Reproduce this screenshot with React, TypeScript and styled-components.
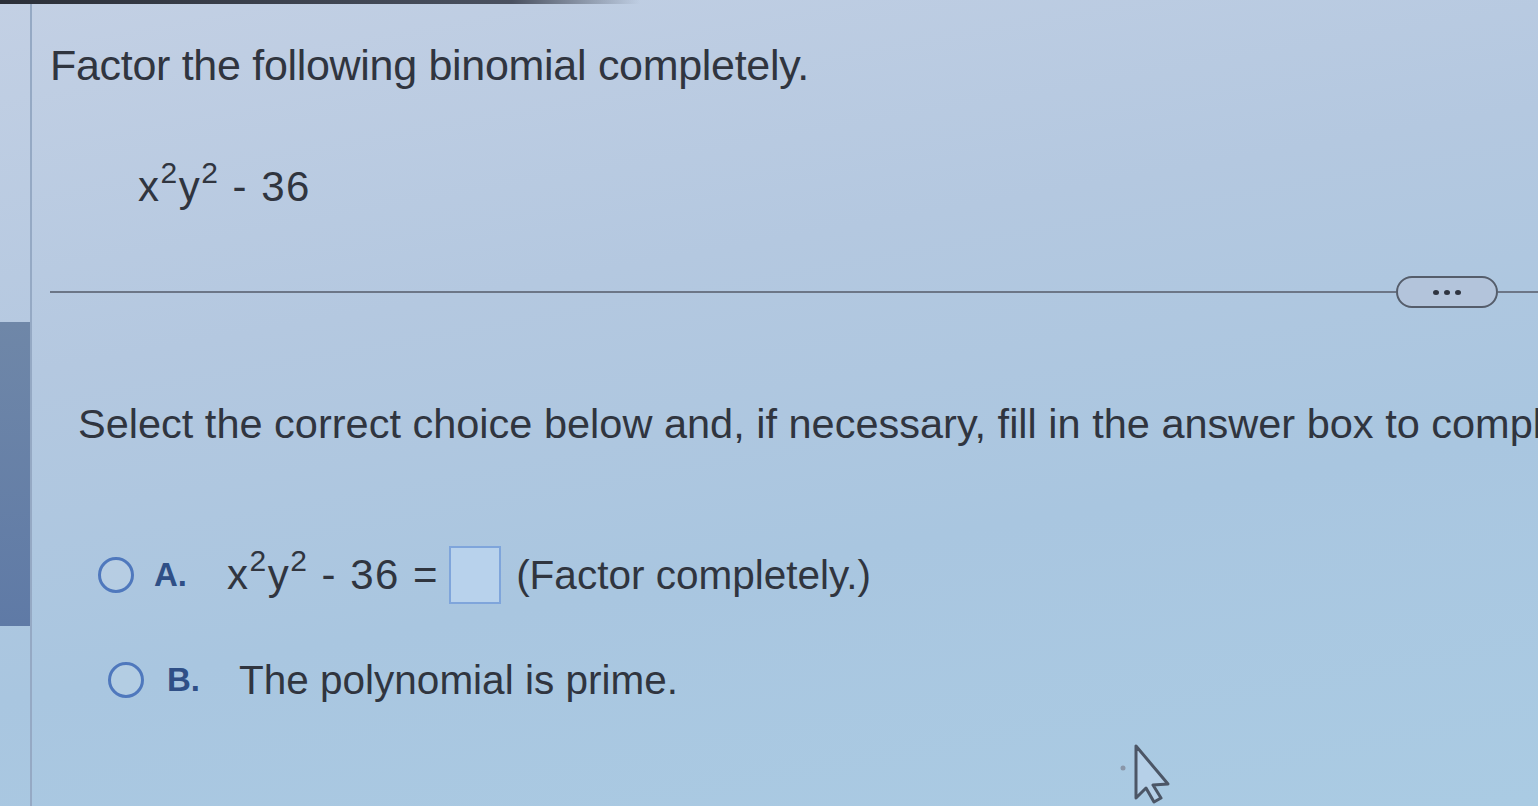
import styled, { createGlobalStyle } from 'styled-components'

const Global = createGlobalStyle`
  html, body {
    margin: 0;
    padding: 0;
    overflow: hidden;
  }
  body {
    font-family: "Liberation Sans", Arial, sans-serif;
  }
`

const Page = styled.div`
  position: relative;
  width: 1538px;
  height: 806px;
  overflow: hidden;
  display: flex;
  background: linear-gradient(170deg, #c3d0e4 0%, #b4c8e0 35%, #a9c6e0 65%, #aacbe3 100%);
  color: #30353f;
  &::before {
    content: "";
    position: absolute;
    top: 0;
    left: 0;
    width: 640px;
    height: 4px;
    background: linear-gradient(90deg, #2b2f38 0%, #4a5160 80%, rgba(74, 81, 96, 0) 100%);
  }
`

const SideRail = styled.div`
  width: 30px;
  flex: none;
  display: flex;
  flex-direction: column;
  padding-top: 322px;
  border-right: 2px solid #95a9c4;
`

const RailBlock = styled.div`
  height: 304px;
  background: linear-gradient(180deg, #6f87a8, #5f7aa6);
`

const Main = styled.div`
  flex: 1;
  min-width: 0;
  padding: 40px 0 0 18px;
  display: flex;
  flex-direction: column;
`

const Heading = styled.div`
  font-size: 43px;
  line-height: 50px;
  letter-spacing: -0.3px;
`

const Expr = styled.div`
  margin: 73px 0 0 88px;
  font-size: 42px;
  line-height: 48px;
  letter-spacing: 1.5px;
`

const Sup = styled.sup`
  font-size: 30px;
  line-height: 0;
  vertical-align: 0.6em;
`

const DividerRow = styled.div`
  margin-top: 65px;
  display: flex;
  align-items: center;
`

const Line = styled.div<{ $grow?: boolean }>`
  flex: ${(p) => (p.$grow ? 1 : 'none')};
  width: ${(p) => (p.$grow ? 'auto' : '40px')};
  height: 2px;
  background: #6c7687;
`

const MorePill = styled.div`
  width: 98px;
  height: 28px;
  border: 2px solid #555d6b;
  border-radius: 16px;
  display: flex;
  align-items: center;
  justify-content: center;
  gap: 5px;
  background: #b3c4db;
`

const Dot = styled.span`
  width: 6px;
  height: 5px;
  border-radius: 50%;
  background: #2f3440;
`

const Prompt = styled.div`
  margin: 92px 0 0 28px;
  font-size: 41.5px;
  line-height: 48px;
  white-space: nowrap;
`

const Choices = styled.div`
  margin: 98px 0 0 48px;
  display: flex;
  flex-direction: column;
  gap: 52px;
`

const Choice = styled.div<{ $indent?: number }>`
  display: flex;
  align-items: center;
  min-height: 48px;
  padding-left: ${(p) => p.$indent ?? 0}px;
  font-size: 40.5px;
`

const Radio = styled.span`
  width: 30px;
  height: 30px;
  border: 3px solid #4f78bd;
  border-radius: 50%;
  flex: none;
  background: rgba(255, 255, 255, 0.12);
`

const Letter = styled.span<{ $lead: number; $gap: number }>`
  margin-left: ${(p) => p.$lead}px;
  width: ${(p) => p.$gap}px;
  font-weight: bold;
  font-size: 33px;
  color: #2f4f86;
`

const MathText = styled.span`
  font-size: 42px;
  letter-spacing: 1.5px;
`

const AnswerBox = styled.span`
  display: inline-block;
  width: 48px;
  height: 54px;
  margin: 0 15px 0 10px;
  border: 2px solid #7fa5db;
  background: #b8d2ec;
`

const Cursor = styled.svg`
  position: absolute;
  left: 1118px;
  top: 740px;
`

export default function App() {
  return (
    <Page>
      <Global />
      <SideRail>
        <RailBlock />
      </SideRail>
      <Main>
        <Heading>Factor the following binomial completely.</Heading>
        <Expr>
          x<Sup>2</Sup>y<Sup>2</Sup> - 36
        </Expr>
        <DividerRow>
          <Line $grow />
          <MorePill>
            <Dot />
            <Dot />
            <Dot />
          </MorePill>
          <Line />
        </DividerRow>
        <Prompt>
          Select the correct choice below and, if necessary, fill in the answer box to complete your choice.
        </Prompt>
        <Choices>
          <Choice>
            <Radio />
            <Letter $lead={20} $gap={73}>A.</Letter>
            <MathText>
              x<Sup>2</Sup>y<Sup>2</Sup> - 36 =
            </MathText>
            <AnswerBox />
            <span>(Factor completely.)</span>
          </Choice>
          <Choice $indent={10}>
            <Radio />
            <Letter $lead={23} $gap={72}>B.</Letter>
            <span>The polynomial is prime.</span>
          </Choice>
        </Choices>
      </Main>
      <Cursor width="60" height="66" viewBox="0 0 60 66">
        <path
          d="M18 6 L18 58 L28 48 L36 62 L43 58 L35 45 L50 44 Z"
          fill="#b6d0e8"
          stroke="#4c5666"
          strokeWidth="3"
          strokeLinejoin="round"
        />
        <circle cx="5" cy="28" r="2.5" fill="#8a96a8" />
      </Cursor>
    </Page>
  )
}
